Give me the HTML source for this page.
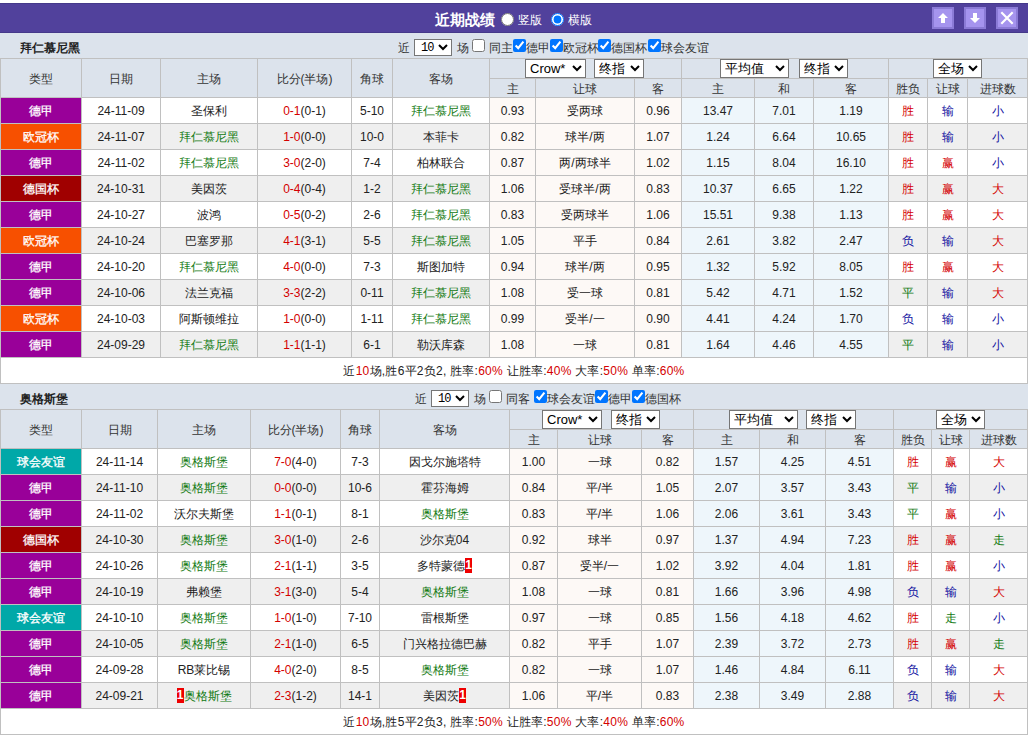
<!DOCTYPE html><html><head><meta charset="utf-8"><style>
*{margin:0;padding:0}
html,body{width:1029px;height:736px;overflow:hidden;background:#fff}
body{position:relative;font-family:"Liberation Sans",sans-serif;font-size:12px;color:#333}
.a{position:absolute;box-sizing:border-box;white-space:nowrap}
.s{position:absolute;height:19px;font-size:13px;font-family:"Liberation Sans",sans-serif;box-sizing:border-box;background:#fff;color:#000}
.s2{position:absolute;width:38px;height:17px;font-size:12px;padding-left:2px;letter-spacing:-1px;font-family:"Liberation Mono",monospace;box-sizing:border-box;background:#fff;color:#000}
.cb{position:absolute;width:13px;height:13px;margin:0}
.rd{position:absolute;width:13px;height:13px;margin:0}
.r1{display:inline-block;background:#e00;color:#fff;font-weight:bold;width:7px;text-align:center;line-height:15px;vertical-align:middle;overflow:hidden;position:relative;top:-1px}
</style></head><body><div class="a" style="left:0px;top:3px;width:1028px;height:30px;background:#51419c;border-top:1px solid #45398a;border-bottom:1px solid #45398a"></div>
<div class="a" style="left:0px;top:33px;width:1028px;height:1px;background:#e6e8f6"></div>
<div class="a" style="left:435px;top:3px;width:70px;height:30px;color:#fff;font-weight:bold;font-size:15px;display:flex;align-items:center;padding-top:4px">近期战绩</div>
<input type="radio" class="rd" style="left:501px;top:13px">
<div class="a" style="left:518px;top:3px;width:40px;height:30px;color:#fff;display:flex;align-items:center;padding-top:5px">竖版</div>
<input type="radio" class="rd" checked style="left:551px;top:13px">
<div class="a" style="left:568px;top:3px;width:40px;height:30px;color:#fff;display:flex;align-items:center;padding-top:5px">横版</div>
<div class="a" style="left:932px;top:7px;width:22px;height:22px;background:#a594ee;box-sizing:border-box;border:2px solid #8b7bd6;display:flex;align-items:center;justify-content:center"><svg width="12" height="12" viewBox="0 0 12 12"><path d="M6 1 L11 6 L8 6 L8 11 L4 11 L4 6 L1 6 Z" fill="#fff"/></svg></div>
<div class="a" style="left:964px;top:7px;width:22px;height:22px;background:#a594ee;box-sizing:border-box;border:2px solid #8b7bd6;display:flex;align-items:center;justify-content:center"><svg width="12" height="12" viewBox="0 0 12 12"><path d="M6 11 L11 6 L8 6 L8 1 L4 1 L4 6 L1 6 Z" fill="#fff"/></svg></div>
<div class="a" style="left:996px;top:7px;width:22px;height:22px;background:#a594ee;box-sizing:border-box;border:2px solid #8b7bd6;display:flex;align-items:center;justify-content:center"><svg width="14" height="14" viewBox="0 0 14 14"><path d="M1.3 1.3 L12.7 12.7 M12.7 1.3 L1.3 12.7" stroke="#fff" stroke-width="2.2"/></svg></div>
<div class="a" style="left:0px;top:33px;width:1028px;height:25px;background:#dce3ec"></div>
<div class="a" style="left:20px;top:33px;width:200px;height:25px;font-weight:bold;display:flex;align-items:center;padding-top:6px;color:#222">拜仁慕尼黑</div>
<div class="a" style="left:398px;top:33px;width:14px;height:25px;display:flex;align-items:center;color:#333;padding-top:5px">近</div>
<select class="s2" style="left:414px;top:39px"><option>10</option></select>
<div class="a" style="left:457px;top:33px;width:14px;height:25px;display:flex;align-items:center;color:#333;padding-top:5px">场</div>
<input type="checkbox" class="cb" style="left:472px;top:39px">
<div class="a" style="left:489px;top:33px;width:24px;height:25px;display:flex;align-items:center;color:#333;padding-top:5px">同主</div>
<input type="checkbox" class="cb" checked style="left:513px;top:39px">
<div class="a" style="left:526px;top:33px;width:60px;height:25px;display:flex;align-items:center;color:#333;padding-top:5px">德甲</div>
<input type="checkbox" class="cb" checked style="left:550px;top:39px">
<div class="a" style="left:563px;top:33px;width:60px;height:25px;display:flex;align-items:center;color:#333;padding-top:5px">欧冠杯</div>
<input type="checkbox" class="cb" checked style="left:598px;top:39px">
<div class="a" style="left:611px;top:33px;width:60px;height:25px;display:flex;align-items:center;color:#333;padding-top:5px">德国杯</div>
<input type="checkbox" class="cb" checked style="left:648px;top:39px">
<div class="a" style="left:661px;top:33px;width:60px;height:25px;display:flex;align-items:center;color:#333;padding-top:5px">球会友谊</div>
<div class="a" style="left:0px;top:58px;width:1028px;height:39px;background:#dce3ec"></div>
<div class="a" style="left:0px;top:97px;width:1028px;height:26px;background:#fff"></div>
<div class="a" style="left:489px;top:97px;width:192px;height:26px;background:#fdf9f6"></div>
<div class="a" style="left:681px;top:97px;width:207px;height:26px;background:#eef6fb"></div>
<div class="a" style="left:0px;top:123px;width:1028px;height:26px;background:#efefef"></div>
<div class="a" style="left:489px;top:123px;width:192px;height:26px;background:#fdf9f6"></div>
<div class="a" style="left:681px;top:123px;width:207px;height:26px;background:#eef6fb"></div>
<div class="a" style="left:0px;top:149px;width:1028px;height:26px;background:#fff"></div>
<div class="a" style="left:489px;top:149px;width:192px;height:26px;background:#fdf9f6"></div>
<div class="a" style="left:681px;top:149px;width:207px;height:26px;background:#eef6fb"></div>
<div class="a" style="left:0px;top:175px;width:1028px;height:26px;background:#efefef"></div>
<div class="a" style="left:489px;top:175px;width:192px;height:26px;background:#fdf9f6"></div>
<div class="a" style="left:681px;top:175px;width:207px;height:26px;background:#eef6fb"></div>
<div class="a" style="left:0px;top:201px;width:1028px;height:26px;background:#fff"></div>
<div class="a" style="left:489px;top:201px;width:192px;height:26px;background:#fdf9f6"></div>
<div class="a" style="left:681px;top:201px;width:207px;height:26px;background:#eef6fb"></div>
<div class="a" style="left:0px;top:227px;width:1028px;height:26px;background:#efefef"></div>
<div class="a" style="left:489px;top:227px;width:192px;height:26px;background:#fdf9f6"></div>
<div class="a" style="left:681px;top:227px;width:207px;height:26px;background:#eef6fb"></div>
<div class="a" style="left:0px;top:253px;width:1028px;height:26px;background:#fff"></div>
<div class="a" style="left:489px;top:253px;width:192px;height:26px;background:#fdf9f6"></div>
<div class="a" style="left:681px;top:253px;width:207px;height:26px;background:#eef6fb"></div>
<div class="a" style="left:0px;top:279px;width:1028px;height:26px;background:#efefef"></div>
<div class="a" style="left:489px;top:279px;width:192px;height:26px;background:#fdf9f6"></div>
<div class="a" style="left:681px;top:279px;width:207px;height:26px;background:#eef6fb"></div>
<div class="a" style="left:0px;top:305px;width:1028px;height:26px;background:#fff"></div>
<div class="a" style="left:489px;top:305px;width:192px;height:26px;background:#fdf9f6"></div>
<div class="a" style="left:681px;top:305px;width:207px;height:26px;background:#eef6fb"></div>
<div class="a" style="left:0px;top:331px;width:1028px;height:26px;background:#efefef"></div>
<div class="a" style="left:489px;top:331px;width:192px;height:26px;background:#fdf9f6"></div>
<div class="a" style="left:681px;top:331px;width:207px;height:26px;background:#eef6fb"></div>
<div class="a" style="left:0px;top:357px;width:1028px;height:26px;background:#fff"></div>
<div class="a" style="left:1px;top:59px;width:80px;height:38px;display:flex;align-items:center;justify-content:center;padding-top:1px;color:#333;padding-top:3px;"><span>类型</span></div>
<div class="a" style="left:82px;top:59px;width:78px;height:38px;display:flex;align-items:center;justify-content:center;padding-top:1px;color:#333;padding-top:3px;"><span>日期</span></div>
<div class="a" style="left:161px;top:59px;width:96px;height:38px;display:flex;align-items:center;justify-content:center;padding-top:1px;color:#333;padding-top:3px;"><span>主场</span></div>
<div class="a" style="left:258px;top:59px;width:93px;height:38px;display:flex;align-items:center;justify-content:center;padding-top:1px;color:#333;padding-top:3px;"><span>比分(半场)</span></div>
<div class="a" style="left:352px;top:59px;width:40px;height:38px;display:flex;align-items:center;justify-content:center;padding-top:1px;color:#333;padding-top:3px;"><span>角球</span></div>
<div class="a" style="left:393px;top:59px;width:96px;height:38px;display:flex;align-items:center;justify-content:center;padding-top:1px;color:#333;padding-top:3px;"><span>客场</span></div>
<div class="a" style="left:490px;top:79px;width:45px;height:18px;display:flex;align-items:center;justify-content:center;padding-top:1px;color:#333;padding-top:2px;"><span>主</span></div>
<div class="a" style="left:536px;top:79px;width:98px;height:18px;display:flex;align-items:center;justify-content:center;padding-top:1px;color:#333;padding-top:2px;"><span>让球</span></div>
<div class="a" style="left:635px;top:79px;width:46px;height:18px;display:flex;align-items:center;justify-content:center;padding-top:1px;color:#333;padding-top:2px;"><span>客</span></div>
<div class="a" style="left:682px;top:79px;width:72px;height:18px;display:flex;align-items:center;justify-content:center;padding-top:1px;color:#333;padding-top:2px;"><span>主</span></div>
<div class="a" style="left:755px;top:79px;width:58px;height:18px;display:flex;align-items:center;justify-content:center;padding-top:1px;color:#333;padding-top:2px;"><span>和</span></div>
<div class="a" style="left:814px;top:79px;width:74px;height:18px;display:flex;align-items:center;justify-content:center;padding-top:1px;color:#333;padding-top:2px;"><span>客</span></div>
<div class="a" style="left:889px;top:79px;width:38px;height:18px;display:flex;align-items:center;justify-content:center;padding-top:1px;color:#333;padding-top:2px;"><span>胜负</span></div>
<div class="a" style="left:928px;top:79px;width:39px;height:18px;display:flex;align-items:center;justify-content:center;padding-top:1px;color:#333;padding-top:2px;"><span>让球</span></div>
<div class="a" style="left:968px;top:79px;width:59px;height:18px;display:flex;align-items:center;justify-content:center;padding-top:1px;color:#333;padding-top:2px;"><span>进球数</span></div>
<select class="s" style="left:525px;top:59px;width:61px"><option>Crow*</option></select>
<select class="s" style="left:594px;top:59px;width:50px"><option>终指</option></select>
<select class="s" style="left:720px;top:59px;width:69px"><option>平均值</option></select>
<select class="s" style="left:799px;top:59px;width:49px"><option>终指</option></select>
<select class="s" style="left:933px;top:59px;width:49px"><option>全场</option></select>
<div class="a" style="left:1px;top:98px;width:80px;height:25px;display:flex;align-items:center;justify-content:center;padding-top:1px;background:#990099;color:#fff;-webkit-text-stroke:0.3px #fff;"><span>德甲</span></div>
<div class="a" style="left:82px;top:98px;width:78px;height:25px;display:flex;align-items:center;justify-content:center;padding-top:1px;color:#222;"><span>24-11-09</span></div>
<div class="a" style="left:161px;top:98px;width:96px;height:25px;display:flex;align-items:center;justify-content:center;padding-top:1px;color:#222;"><span>圣保利</span></div>
<div class="a" style="left:258px;top:98px;width:93px;height:25px;display:flex;align-items:center;justify-content:center;padding-top:1px;color:#222;"><span><span style="color:#d40000">0-1</span>(0-1)</span></div>
<div class="a" style="left:352px;top:98px;width:40px;height:25px;display:flex;align-items:center;justify-content:center;padding-top:1px;color:#222;"><span>5-10</span></div>
<div class="a" style="left:393px;top:98px;width:96px;height:25px;display:flex;align-items:center;justify-content:center;padding-top:1px;color:#222;"><span><span style="color:#127a12">拜仁慕尼黑</span></span></div>
<div class="a" style="left:490px;top:98px;width:45px;height:25px;display:flex;align-items:center;justify-content:center;padding-top:1px;color:#222;"><span>0.93</span></div>
<div class="a" style="left:536px;top:98px;width:98px;height:25px;display:flex;align-items:center;justify-content:center;padding-top:1px;color:#222;"><span>受两球</span></div>
<div class="a" style="left:635px;top:98px;width:46px;height:25px;display:flex;align-items:center;justify-content:center;padding-top:1px;color:#222;"><span>0.96</span></div>
<div class="a" style="left:682px;top:98px;width:72px;height:25px;display:flex;align-items:center;justify-content:center;padding-top:1px;color:#222;"><span>13.47</span></div>
<div class="a" style="left:755px;top:98px;width:58px;height:25px;display:flex;align-items:center;justify-content:center;padding-top:1px;color:#222;"><span>7.01</span></div>
<div class="a" style="left:814px;top:98px;width:74px;height:25px;display:flex;align-items:center;justify-content:center;padding-top:1px;color:#222;"><span>1.19</span></div>
<div class="a" style="left:889px;top:98px;width:38px;height:25px;display:flex;align-items:center;justify-content:center;padding-top:1px;color:#d40000;"><span>胜</span></div>
<div class="a" style="left:928px;top:98px;width:39px;height:25px;display:flex;align-items:center;justify-content:center;padding-top:1px;color:#1010a0;"><span>输</span></div>
<div class="a" style="left:968px;top:98px;width:59px;height:25px;display:flex;align-items:center;justify-content:center;padding-top:1px;color:#1010a0;"><span>小</span></div>
<div class="a" style="left:1px;top:124px;width:80px;height:25px;display:flex;align-items:center;justify-content:center;padding-top:1px;background:#f75000;color:#fff;-webkit-text-stroke:0.3px #fff;"><span>欧冠杯</span></div>
<div class="a" style="left:82px;top:124px;width:78px;height:25px;display:flex;align-items:center;justify-content:center;padding-top:1px;color:#222;"><span>24-11-07</span></div>
<div class="a" style="left:161px;top:124px;width:96px;height:25px;display:flex;align-items:center;justify-content:center;padding-top:1px;color:#222;"><span><span style="color:#127a12">拜仁慕尼黑</span></span></div>
<div class="a" style="left:258px;top:124px;width:93px;height:25px;display:flex;align-items:center;justify-content:center;padding-top:1px;color:#222;"><span><span style="color:#d40000">1-0</span>(0-0)</span></div>
<div class="a" style="left:352px;top:124px;width:40px;height:25px;display:flex;align-items:center;justify-content:center;padding-top:1px;color:#222;"><span>10-0</span></div>
<div class="a" style="left:393px;top:124px;width:96px;height:25px;display:flex;align-items:center;justify-content:center;padding-top:1px;color:#222;"><span>本菲卡</span></div>
<div class="a" style="left:490px;top:124px;width:45px;height:25px;display:flex;align-items:center;justify-content:center;padding-top:1px;color:#222;"><span>0.82</span></div>
<div class="a" style="left:536px;top:124px;width:98px;height:25px;display:flex;align-items:center;justify-content:center;padding-top:1px;color:#222;"><span>球半/两</span></div>
<div class="a" style="left:635px;top:124px;width:46px;height:25px;display:flex;align-items:center;justify-content:center;padding-top:1px;color:#222;"><span>1.07</span></div>
<div class="a" style="left:682px;top:124px;width:72px;height:25px;display:flex;align-items:center;justify-content:center;padding-top:1px;color:#222;"><span>1.24</span></div>
<div class="a" style="left:755px;top:124px;width:58px;height:25px;display:flex;align-items:center;justify-content:center;padding-top:1px;color:#222;"><span>6.64</span></div>
<div class="a" style="left:814px;top:124px;width:74px;height:25px;display:flex;align-items:center;justify-content:center;padding-top:1px;color:#222;"><span>10.65</span></div>
<div class="a" style="left:889px;top:124px;width:38px;height:25px;display:flex;align-items:center;justify-content:center;padding-top:1px;color:#d40000;"><span>胜</span></div>
<div class="a" style="left:928px;top:124px;width:39px;height:25px;display:flex;align-items:center;justify-content:center;padding-top:1px;color:#1010a0;"><span>输</span></div>
<div class="a" style="left:968px;top:124px;width:59px;height:25px;display:flex;align-items:center;justify-content:center;padding-top:1px;color:#1010a0;"><span>小</span></div>
<div class="a" style="left:1px;top:150px;width:80px;height:25px;display:flex;align-items:center;justify-content:center;padding-top:1px;background:#990099;color:#fff;-webkit-text-stroke:0.3px #fff;"><span>德甲</span></div>
<div class="a" style="left:82px;top:150px;width:78px;height:25px;display:flex;align-items:center;justify-content:center;padding-top:1px;color:#222;"><span>24-11-02</span></div>
<div class="a" style="left:161px;top:150px;width:96px;height:25px;display:flex;align-items:center;justify-content:center;padding-top:1px;color:#222;"><span><span style="color:#127a12">拜仁慕尼黑</span></span></div>
<div class="a" style="left:258px;top:150px;width:93px;height:25px;display:flex;align-items:center;justify-content:center;padding-top:1px;color:#222;"><span><span style="color:#d40000">3-0</span>(2-0)</span></div>
<div class="a" style="left:352px;top:150px;width:40px;height:25px;display:flex;align-items:center;justify-content:center;padding-top:1px;color:#222;"><span>7-4</span></div>
<div class="a" style="left:393px;top:150px;width:96px;height:25px;display:flex;align-items:center;justify-content:center;padding-top:1px;color:#222;"><span>柏林联合</span></div>
<div class="a" style="left:490px;top:150px;width:45px;height:25px;display:flex;align-items:center;justify-content:center;padding-top:1px;color:#222;"><span>0.87</span></div>
<div class="a" style="left:536px;top:150px;width:98px;height:25px;display:flex;align-items:center;justify-content:center;padding-top:1px;color:#222;"><span>两/两球半</span></div>
<div class="a" style="left:635px;top:150px;width:46px;height:25px;display:flex;align-items:center;justify-content:center;padding-top:1px;color:#222;"><span>1.02</span></div>
<div class="a" style="left:682px;top:150px;width:72px;height:25px;display:flex;align-items:center;justify-content:center;padding-top:1px;color:#222;"><span>1.15</span></div>
<div class="a" style="left:755px;top:150px;width:58px;height:25px;display:flex;align-items:center;justify-content:center;padding-top:1px;color:#222;"><span>8.04</span></div>
<div class="a" style="left:814px;top:150px;width:74px;height:25px;display:flex;align-items:center;justify-content:center;padding-top:1px;color:#222;"><span>16.10</span></div>
<div class="a" style="left:889px;top:150px;width:38px;height:25px;display:flex;align-items:center;justify-content:center;padding-top:1px;color:#d40000;"><span>胜</span></div>
<div class="a" style="left:928px;top:150px;width:39px;height:25px;display:flex;align-items:center;justify-content:center;padding-top:1px;color:#d40000;"><span>赢</span></div>
<div class="a" style="left:968px;top:150px;width:59px;height:25px;display:flex;align-items:center;justify-content:center;padding-top:1px;color:#1010a0;"><span>小</span></div>
<div class="a" style="left:1px;top:176px;width:80px;height:25px;display:flex;align-items:center;justify-content:center;padding-top:1px;background:#a00000;color:#fff;-webkit-text-stroke:0.3px #fff;"><span>德国杯</span></div>
<div class="a" style="left:82px;top:176px;width:78px;height:25px;display:flex;align-items:center;justify-content:center;padding-top:1px;color:#222;"><span>24-10-31</span></div>
<div class="a" style="left:161px;top:176px;width:96px;height:25px;display:flex;align-items:center;justify-content:center;padding-top:1px;color:#222;"><span>美因茨</span></div>
<div class="a" style="left:258px;top:176px;width:93px;height:25px;display:flex;align-items:center;justify-content:center;padding-top:1px;color:#222;"><span><span style="color:#d40000">0-4</span>(0-4)</span></div>
<div class="a" style="left:352px;top:176px;width:40px;height:25px;display:flex;align-items:center;justify-content:center;padding-top:1px;color:#222;"><span>1-2</span></div>
<div class="a" style="left:393px;top:176px;width:96px;height:25px;display:flex;align-items:center;justify-content:center;padding-top:1px;color:#222;"><span><span style="color:#127a12">拜仁慕尼黑</span></span></div>
<div class="a" style="left:490px;top:176px;width:45px;height:25px;display:flex;align-items:center;justify-content:center;padding-top:1px;color:#222;"><span>1.06</span></div>
<div class="a" style="left:536px;top:176px;width:98px;height:25px;display:flex;align-items:center;justify-content:center;padding-top:1px;color:#222;"><span>受球半/两</span></div>
<div class="a" style="left:635px;top:176px;width:46px;height:25px;display:flex;align-items:center;justify-content:center;padding-top:1px;color:#222;"><span>0.83</span></div>
<div class="a" style="left:682px;top:176px;width:72px;height:25px;display:flex;align-items:center;justify-content:center;padding-top:1px;color:#222;"><span>10.37</span></div>
<div class="a" style="left:755px;top:176px;width:58px;height:25px;display:flex;align-items:center;justify-content:center;padding-top:1px;color:#222;"><span>6.65</span></div>
<div class="a" style="left:814px;top:176px;width:74px;height:25px;display:flex;align-items:center;justify-content:center;padding-top:1px;color:#222;"><span>1.22</span></div>
<div class="a" style="left:889px;top:176px;width:38px;height:25px;display:flex;align-items:center;justify-content:center;padding-top:1px;color:#d40000;"><span>胜</span></div>
<div class="a" style="left:928px;top:176px;width:39px;height:25px;display:flex;align-items:center;justify-content:center;padding-top:1px;color:#d40000;"><span>赢</span></div>
<div class="a" style="left:968px;top:176px;width:59px;height:25px;display:flex;align-items:center;justify-content:center;padding-top:1px;color:#d40000;"><span>大</span></div>
<div class="a" style="left:1px;top:202px;width:80px;height:25px;display:flex;align-items:center;justify-content:center;padding-top:1px;background:#990099;color:#fff;-webkit-text-stroke:0.3px #fff;"><span>德甲</span></div>
<div class="a" style="left:82px;top:202px;width:78px;height:25px;display:flex;align-items:center;justify-content:center;padding-top:1px;color:#222;"><span>24-10-27</span></div>
<div class="a" style="left:161px;top:202px;width:96px;height:25px;display:flex;align-items:center;justify-content:center;padding-top:1px;color:#222;"><span>波鸿</span></div>
<div class="a" style="left:258px;top:202px;width:93px;height:25px;display:flex;align-items:center;justify-content:center;padding-top:1px;color:#222;"><span><span style="color:#d40000">0-5</span>(0-2)</span></div>
<div class="a" style="left:352px;top:202px;width:40px;height:25px;display:flex;align-items:center;justify-content:center;padding-top:1px;color:#222;"><span>2-6</span></div>
<div class="a" style="left:393px;top:202px;width:96px;height:25px;display:flex;align-items:center;justify-content:center;padding-top:1px;color:#222;"><span><span style="color:#127a12">拜仁慕尼黑</span></span></div>
<div class="a" style="left:490px;top:202px;width:45px;height:25px;display:flex;align-items:center;justify-content:center;padding-top:1px;color:#222;"><span>0.83</span></div>
<div class="a" style="left:536px;top:202px;width:98px;height:25px;display:flex;align-items:center;justify-content:center;padding-top:1px;color:#222;"><span>受两球半</span></div>
<div class="a" style="left:635px;top:202px;width:46px;height:25px;display:flex;align-items:center;justify-content:center;padding-top:1px;color:#222;"><span>1.06</span></div>
<div class="a" style="left:682px;top:202px;width:72px;height:25px;display:flex;align-items:center;justify-content:center;padding-top:1px;color:#222;"><span>15.51</span></div>
<div class="a" style="left:755px;top:202px;width:58px;height:25px;display:flex;align-items:center;justify-content:center;padding-top:1px;color:#222;"><span>9.38</span></div>
<div class="a" style="left:814px;top:202px;width:74px;height:25px;display:flex;align-items:center;justify-content:center;padding-top:1px;color:#222;"><span>1.13</span></div>
<div class="a" style="left:889px;top:202px;width:38px;height:25px;display:flex;align-items:center;justify-content:center;padding-top:1px;color:#d40000;"><span>胜</span></div>
<div class="a" style="left:928px;top:202px;width:39px;height:25px;display:flex;align-items:center;justify-content:center;padding-top:1px;color:#d40000;"><span>赢</span></div>
<div class="a" style="left:968px;top:202px;width:59px;height:25px;display:flex;align-items:center;justify-content:center;padding-top:1px;color:#d40000;"><span>大</span></div>
<div class="a" style="left:1px;top:228px;width:80px;height:25px;display:flex;align-items:center;justify-content:center;padding-top:1px;background:#f75000;color:#fff;-webkit-text-stroke:0.3px #fff;"><span>欧冠杯</span></div>
<div class="a" style="left:82px;top:228px;width:78px;height:25px;display:flex;align-items:center;justify-content:center;padding-top:1px;color:#222;"><span>24-10-24</span></div>
<div class="a" style="left:161px;top:228px;width:96px;height:25px;display:flex;align-items:center;justify-content:center;padding-top:1px;color:#222;"><span>巴塞罗那</span></div>
<div class="a" style="left:258px;top:228px;width:93px;height:25px;display:flex;align-items:center;justify-content:center;padding-top:1px;color:#222;"><span><span style="color:#d40000">4-1</span>(3-1)</span></div>
<div class="a" style="left:352px;top:228px;width:40px;height:25px;display:flex;align-items:center;justify-content:center;padding-top:1px;color:#222;"><span>5-5</span></div>
<div class="a" style="left:393px;top:228px;width:96px;height:25px;display:flex;align-items:center;justify-content:center;padding-top:1px;color:#222;"><span><span style="color:#127a12">拜仁慕尼黑</span></span></div>
<div class="a" style="left:490px;top:228px;width:45px;height:25px;display:flex;align-items:center;justify-content:center;padding-top:1px;color:#222;"><span>1.05</span></div>
<div class="a" style="left:536px;top:228px;width:98px;height:25px;display:flex;align-items:center;justify-content:center;padding-top:1px;color:#222;"><span>平手</span></div>
<div class="a" style="left:635px;top:228px;width:46px;height:25px;display:flex;align-items:center;justify-content:center;padding-top:1px;color:#222;"><span>0.84</span></div>
<div class="a" style="left:682px;top:228px;width:72px;height:25px;display:flex;align-items:center;justify-content:center;padding-top:1px;color:#222;"><span>2.61</span></div>
<div class="a" style="left:755px;top:228px;width:58px;height:25px;display:flex;align-items:center;justify-content:center;padding-top:1px;color:#222;"><span>3.82</span></div>
<div class="a" style="left:814px;top:228px;width:74px;height:25px;display:flex;align-items:center;justify-content:center;padding-top:1px;color:#222;"><span>2.47</span></div>
<div class="a" style="left:889px;top:228px;width:38px;height:25px;display:flex;align-items:center;justify-content:center;padding-top:1px;color:#1010a0;"><span>负</span></div>
<div class="a" style="left:928px;top:228px;width:39px;height:25px;display:flex;align-items:center;justify-content:center;padding-top:1px;color:#1010a0;"><span>输</span></div>
<div class="a" style="left:968px;top:228px;width:59px;height:25px;display:flex;align-items:center;justify-content:center;padding-top:1px;color:#d40000;"><span>大</span></div>
<div class="a" style="left:1px;top:254px;width:80px;height:25px;display:flex;align-items:center;justify-content:center;padding-top:1px;background:#990099;color:#fff;-webkit-text-stroke:0.3px #fff;"><span>德甲</span></div>
<div class="a" style="left:82px;top:254px;width:78px;height:25px;display:flex;align-items:center;justify-content:center;padding-top:1px;color:#222;"><span>24-10-20</span></div>
<div class="a" style="left:161px;top:254px;width:96px;height:25px;display:flex;align-items:center;justify-content:center;padding-top:1px;color:#222;"><span><span style="color:#127a12">拜仁慕尼黑</span></span></div>
<div class="a" style="left:258px;top:254px;width:93px;height:25px;display:flex;align-items:center;justify-content:center;padding-top:1px;color:#222;"><span><span style="color:#d40000">4-0</span>(0-0)</span></div>
<div class="a" style="left:352px;top:254px;width:40px;height:25px;display:flex;align-items:center;justify-content:center;padding-top:1px;color:#222;"><span>7-3</span></div>
<div class="a" style="left:393px;top:254px;width:96px;height:25px;display:flex;align-items:center;justify-content:center;padding-top:1px;color:#222;"><span>斯图加特</span></div>
<div class="a" style="left:490px;top:254px;width:45px;height:25px;display:flex;align-items:center;justify-content:center;padding-top:1px;color:#222;"><span>0.94</span></div>
<div class="a" style="left:536px;top:254px;width:98px;height:25px;display:flex;align-items:center;justify-content:center;padding-top:1px;color:#222;"><span>球半/两</span></div>
<div class="a" style="left:635px;top:254px;width:46px;height:25px;display:flex;align-items:center;justify-content:center;padding-top:1px;color:#222;"><span>0.95</span></div>
<div class="a" style="left:682px;top:254px;width:72px;height:25px;display:flex;align-items:center;justify-content:center;padding-top:1px;color:#222;"><span>1.32</span></div>
<div class="a" style="left:755px;top:254px;width:58px;height:25px;display:flex;align-items:center;justify-content:center;padding-top:1px;color:#222;"><span>5.92</span></div>
<div class="a" style="left:814px;top:254px;width:74px;height:25px;display:flex;align-items:center;justify-content:center;padding-top:1px;color:#222;"><span>8.05</span></div>
<div class="a" style="left:889px;top:254px;width:38px;height:25px;display:flex;align-items:center;justify-content:center;padding-top:1px;color:#d40000;"><span>胜</span></div>
<div class="a" style="left:928px;top:254px;width:39px;height:25px;display:flex;align-items:center;justify-content:center;padding-top:1px;color:#d40000;"><span>赢</span></div>
<div class="a" style="left:968px;top:254px;width:59px;height:25px;display:flex;align-items:center;justify-content:center;padding-top:1px;color:#d40000;"><span>大</span></div>
<div class="a" style="left:1px;top:280px;width:80px;height:25px;display:flex;align-items:center;justify-content:center;padding-top:1px;background:#990099;color:#fff;-webkit-text-stroke:0.3px #fff;"><span>德甲</span></div>
<div class="a" style="left:82px;top:280px;width:78px;height:25px;display:flex;align-items:center;justify-content:center;padding-top:1px;color:#222;"><span>24-10-06</span></div>
<div class="a" style="left:161px;top:280px;width:96px;height:25px;display:flex;align-items:center;justify-content:center;padding-top:1px;color:#222;"><span>法兰克福</span></div>
<div class="a" style="left:258px;top:280px;width:93px;height:25px;display:flex;align-items:center;justify-content:center;padding-top:1px;color:#222;"><span><span style="color:#d40000">3-3</span>(2-2)</span></div>
<div class="a" style="left:352px;top:280px;width:40px;height:25px;display:flex;align-items:center;justify-content:center;padding-top:1px;color:#222;"><span>0-11</span></div>
<div class="a" style="left:393px;top:280px;width:96px;height:25px;display:flex;align-items:center;justify-content:center;padding-top:1px;color:#222;"><span><span style="color:#127a12">拜仁慕尼黑</span></span></div>
<div class="a" style="left:490px;top:280px;width:45px;height:25px;display:flex;align-items:center;justify-content:center;padding-top:1px;color:#222;"><span>1.08</span></div>
<div class="a" style="left:536px;top:280px;width:98px;height:25px;display:flex;align-items:center;justify-content:center;padding-top:1px;color:#222;"><span>受一球</span></div>
<div class="a" style="left:635px;top:280px;width:46px;height:25px;display:flex;align-items:center;justify-content:center;padding-top:1px;color:#222;"><span>0.81</span></div>
<div class="a" style="left:682px;top:280px;width:72px;height:25px;display:flex;align-items:center;justify-content:center;padding-top:1px;color:#222;"><span>5.42</span></div>
<div class="a" style="left:755px;top:280px;width:58px;height:25px;display:flex;align-items:center;justify-content:center;padding-top:1px;color:#222;"><span>4.71</span></div>
<div class="a" style="left:814px;top:280px;width:74px;height:25px;display:flex;align-items:center;justify-content:center;padding-top:1px;color:#222;"><span>1.52</span></div>
<div class="a" style="left:889px;top:280px;width:38px;height:25px;display:flex;align-items:center;justify-content:center;padding-top:1px;color:#127a12;"><span>平</span></div>
<div class="a" style="left:928px;top:280px;width:39px;height:25px;display:flex;align-items:center;justify-content:center;padding-top:1px;color:#1010a0;"><span>输</span></div>
<div class="a" style="left:968px;top:280px;width:59px;height:25px;display:flex;align-items:center;justify-content:center;padding-top:1px;color:#d40000;"><span>大</span></div>
<div class="a" style="left:1px;top:306px;width:80px;height:25px;display:flex;align-items:center;justify-content:center;padding-top:1px;background:#f75000;color:#fff;-webkit-text-stroke:0.3px #fff;"><span>欧冠杯</span></div>
<div class="a" style="left:82px;top:306px;width:78px;height:25px;display:flex;align-items:center;justify-content:center;padding-top:1px;color:#222;"><span>24-10-03</span></div>
<div class="a" style="left:161px;top:306px;width:96px;height:25px;display:flex;align-items:center;justify-content:center;padding-top:1px;color:#222;"><span>阿斯顿维拉</span></div>
<div class="a" style="left:258px;top:306px;width:93px;height:25px;display:flex;align-items:center;justify-content:center;padding-top:1px;color:#222;"><span><span style="color:#d40000">1-0</span>(0-0)</span></div>
<div class="a" style="left:352px;top:306px;width:40px;height:25px;display:flex;align-items:center;justify-content:center;padding-top:1px;color:#222;"><span>1-11</span></div>
<div class="a" style="left:393px;top:306px;width:96px;height:25px;display:flex;align-items:center;justify-content:center;padding-top:1px;color:#222;"><span><span style="color:#127a12">拜仁慕尼黑</span></span></div>
<div class="a" style="left:490px;top:306px;width:45px;height:25px;display:flex;align-items:center;justify-content:center;padding-top:1px;color:#222;"><span>0.99</span></div>
<div class="a" style="left:536px;top:306px;width:98px;height:25px;display:flex;align-items:center;justify-content:center;padding-top:1px;color:#222;"><span>受半/一</span></div>
<div class="a" style="left:635px;top:306px;width:46px;height:25px;display:flex;align-items:center;justify-content:center;padding-top:1px;color:#222;"><span>0.90</span></div>
<div class="a" style="left:682px;top:306px;width:72px;height:25px;display:flex;align-items:center;justify-content:center;padding-top:1px;color:#222;"><span>4.41</span></div>
<div class="a" style="left:755px;top:306px;width:58px;height:25px;display:flex;align-items:center;justify-content:center;padding-top:1px;color:#222;"><span>4.24</span></div>
<div class="a" style="left:814px;top:306px;width:74px;height:25px;display:flex;align-items:center;justify-content:center;padding-top:1px;color:#222;"><span>1.70</span></div>
<div class="a" style="left:889px;top:306px;width:38px;height:25px;display:flex;align-items:center;justify-content:center;padding-top:1px;color:#1010a0;"><span>负</span></div>
<div class="a" style="left:928px;top:306px;width:39px;height:25px;display:flex;align-items:center;justify-content:center;padding-top:1px;color:#1010a0;"><span>输</span></div>
<div class="a" style="left:968px;top:306px;width:59px;height:25px;display:flex;align-items:center;justify-content:center;padding-top:1px;color:#1010a0;"><span>小</span></div>
<div class="a" style="left:1px;top:332px;width:80px;height:25px;display:flex;align-items:center;justify-content:center;padding-top:1px;background:#990099;color:#fff;-webkit-text-stroke:0.3px #fff;"><span>德甲</span></div>
<div class="a" style="left:82px;top:332px;width:78px;height:25px;display:flex;align-items:center;justify-content:center;padding-top:1px;color:#222;"><span>24-09-29</span></div>
<div class="a" style="left:161px;top:332px;width:96px;height:25px;display:flex;align-items:center;justify-content:center;padding-top:1px;color:#222;"><span><span style="color:#127a12">拜仁慕尼黑</span></span></div>
<div class="a" style="left:258px;top:332px;width:93px;height:25px;display:flex;align-items:center;justify-content:center;padding-top:1px;color:#222;"><span><span style="color:#d40000">1-1</span>(1-1)</span></div>
<div class="a" style="left:352px;top:332px;width:40px;height:25px;display:flex;align-items:center;justify-content:center;padding-top:1px;color:#222;"><span>6-1</span></div>
<div class="a" style="left:393px;top:332px;width:96px;height:25px;display:flex;align-items:center;justify-content:center;padding-top:1px;color:#222;"><span>勒沃库森</span></div>
<div class="a" style="left:490px;top:332px;width:45px;height:25px;display:flex;align-items:center;justify-content:center;padding-top:1px;color:#222;"><span>1.08</span></div>
<div class="a" style="left:536px;top:332px;width:98px;height:25px;display:flex;align-items:center;justify-content:center;padding-top:1px;color:#222;"><span>一球</span></div>
<div class="a" style="left:635px;top:332px;width:46px;height:25px;display:flex;align-items:center;justify-content:center;padding-top:1px;color:#222;"><span>0.81</span></div>
<div class="a" style="left:682px;top:332px;width:72px;height:25px;display:flex;align-items:center;justify-content:center;padding-top:1px;color:#222;"><span>1.64</span></div>
<div class="a" style="left:755px;top:332px;width:58px;height:25px;display:flex;align-items:center;justify-content:center;padding-top:1px;color:#222;"><span>4.46</span></div>
<div class="a" style="left:814px;top:332px;width:74px;height:25px;display:flex;align-items:center;justify-content:center;padding-top:1px;color:#222;"><span>4.55</span></div>
<div class="a" style="left:889px;top:332px;width:38px;height:25px;display:flex;align-items:center;justify-content:center;padding-top:1px;color:#127a12;"><span>平</span></div>
<div class="a" style="left:928px;top:332px;width:39px;height:25px;display:flex;align-items:center;justify-content:center;padding-top:1px;color:#1010a0;"><span>输</span></div>
<div class="a" style="left:968px;top:332px;width:59px;height:25px;display:flex;align-items:center;justify-content:center;padding-top:1px;color:#1010a0;"><span>小</span></div>
<div class="a" style="left:1px;top:358px;width:1026px;height:25px;display:flex;align-items:center;justify-content:center;padding-top:1px;color:#222;letter-spacing:0.25px;"><span>近<span style="color:#d40000">10</span>场,胜6平2负2, 胜率:<span style="color:#d40000">60%</span> 让胜率:<span style="color:#d40000">40%</span> 大率:<span style="color:#d40000">50%</span> 单率:<span style="color:#d40000">60%</span></span></div>
<div class="a" style="left:0px;top:58px;width:1028px;height:1px;background:#c0c0c0"></div>
<div class="a" style="left:489px;top:78px;width:539px;height:1px;background:#c0c0c0"></div>
<div class="a" style="left:0px;top:97px;width:1028px;height:1px;background:#c0c0c0"></div>
<div class="a" style="left:0px;top:123px;width:1028px;height:1px;background:#c0c0c0"></div>
<div class="a" style="left:0px;top:149px;width:1028px;height:1px;background:#c0c0c0"></div>
<div class="a" style="left:0px;top:175px;width:1028px;height:1px;background:#c0c0c0"></div>
<div class="a" style="left:0px;top:201px;width:1028px;height:1px;background:#c0c0c0"></div>
<div class="a" style="left:0px;top:227px;width:1028px;height:1px;background:#c0c0c0"></div>
<div class="a" style="left:0px;top:253px;width:1028px;height:1px;background:#c0c0c0"></div>
<div class="a" style="left:0px;top:279px;width:1028px;height:1px;background:#c0c0c0"></div>
<div class="a" style="left:0px;top:305px;width:1028px;height:1px;background:#c0c0c0"></div>
<div class="a" style="left:0px;top:331px;width:1028px;height:1px;background:#c0c0c0"></div>
<div class="a" style="left:0px;top:357px;width:1028px;height:1px;background:#c0c0c0"></div>
<div class="a" style="left:0px;top:383px;width:1028px;height:1px;background:#c0c0c0"></div>
<div class="a" style="left:0px;top:58px;width:1px;height:326px;background:#c0c0c0"></div>
<div class="a" style="left:1027px;top:58px;width:1px;height:326px;background:#c0c0c0"></div>
<div class="a" style="left:81px;top:58px;width:1px;height:300px;background:#c0c0c0"></div>
<div class="a" style="left:160px;top:58px;width:1px;height:300px;background:#c0c0c0"></div>
<div class="a" style="left:257px;top:58px;width:1px;height:300px;background:#c0c0c0"></div>
<div class="a" style="left:351px;top:58px;width:1px;height:300px;background:#c0c0c0"></div>
<div class="a" style="left:392px;top:58px;width:1px;height:300px;background:#c0c0c0"></div>
<div class="a" style="left:489px;top:58px;width:1px;height:300px;background:#c0c0c0"></div>
<div class="a" style="left:535px;top:78px;width:1px;height:280px;background:#c0c0c0"></div>
<div class="a" style="left:634px;top:78px;width:1px;height:280px;background:#c0c0c0"></div>
<div class="a" style="left:681px;top:58px;width:1px;height:300px;background:#c0c0c0"></div>
<div class="a" style="left:754px;top:78px;width:1px;height:280px;background:#c0c0c0"></div>
<div class="a" style="left:813px;top:78px;width:1px;height:280px;background:#c0c0c0"></div>
<div class="a" style="left:888px;top:58px;width:1px;height:300px;background:#c0c0c0"></div>
<div class="a" style="left:927px;top:78px;width:1px;height:280px;background:#c0c0c0"></div>
<div class="a" style="left:967px;top:78px;width:1px;height:280px;background:#c0c0c0"></div>
<div class="a" style="left:0px;top:384px;width:1028px;height:25px;background:#dce3ec"></div>
<div class="a" style="left:20px;top:384px;width:200px;height:25px;font-weight:bold;display:flex;align-items:center;padding-top:6px;color:#222">奥格斯堡</div>
<div class="a" style="left:415px;top:384px;width:14px;height:25px;display:flex;align-items:center;color:#333;padding-top:5px">近</div>
<select class="s2" style="left:431px;top:390px"><option>10</option></select>
<div class="a" style="left:474px;top:384px;width:14px;height:25px;display:flex;align-items:center;color:#333;padding-top:5px">场</div>
<input type="checkbox" class="cb" style="left:489px;top:390px">
<div class="a" style="left:506px;top:384px;width:24px;height:25px;display:flex;align-items:center;color:#333;padding-top:5px">同客</div>
<input type="checkbox" class="cb" checked style="left:534px;top:390px">
<div class="a" style="left:547px;top:384px;width:60px;height:25px;display:flex;align-items:center;color:#333;padding-top:5px">球会友谊</div>
<input type="checkbox" class="cb" checked style="left:595px;top:390px">
<div class="a" style="left:608px;top:384px;width:60px;height:25px;display:flex;align-items:center;color:#333;padding-top:5px">德甲</div>
<input type="checkbox" class="cb" checked style="left:632px;top:390px">
<div class="a" style="left:645px;top:384px;width:60px;height:25px;display:flex;align-items:center;color:#333;padding-top:5px">德国杯</div>
<div class="a" style="left:0px;top:409px;width:1028px;height:39px;background:#dce3ec"></div>
<div class="a" style="left:0px;top:448px;width:1028px;height:26px;background:#fff"></div>
<div class="a" style="left:509px;top:448px;width:184px;height:26px;background:#fdf9f6"></div>
<div class="a" style="left:693px;top:448px;width:200px;height:26px;background:#eef6fb"></div>
<div class="a" style="left:0px;top:474px;width:1028px;height:26px;background:#efefef"></div>
<div class="a" style="left:509px;top:474px;width:184px;height:26px;background:#fdf9f6"></div>
<div class="a" style="left:693px;top:474px;width:200px;height:26px;background:#eef6fb"></div>
<div class="a" style="left:0px;top:500px;width:1028px;height:26px;background:#fff"></div>
<div class="a" style="left:509px;top:500px;width:184px;height:26px;background:#fdf9f6"></div>
<div class="a" style="left:693px;top:500px;width:200px;height:26px;background:#eef6fb"></div>
<div class="a" style="left:0px;top:526px;width:1028px;height:26px;background:#efefef"></div>
<div class="a" style="left:509px;top:526px;width:184px;height:26px;background:#fdf9f6"></div>
<div class="a" style="left:693px;top:526px;width:200px;height:26px;background:#eef6fb"></div>
<div class="a" style="left:0px;top:552px;width:1028px;height:26px;background:#fff"></div>
<div class="a" style="left:509px;top:552px;width:184px;height:26px;background:#fdf9f6"></div>
<div class="a" style="left:693px;top:552px;width:200px;height:26px;background:#eef6fb"></div>
<div class="a" style="left:0px;top:578px;width:1028px;height:26px;background:#efefef"></div>
<div class="a" style="left:509px;top:578px;width:184px;height:26px;background:#fdf9f6"></div>
<div class="a" style="left:693px;top:578px;width:200px;height:26px;background:#eef6fb"></div>
<div class="a" style="left:0px;top:604px;width:1028px;height:26px;background:#fff"></div>
<div class="a" style="left:509px;top:604px;width:184px;height:26px;background:#fdf9f6"></div>
<div class="a" style="left:693px;top:604px;width:200px;height:26px;background:#eef6fb"></div>
<div class="a" style="left:0px;top:630px;width:1028px;height:26px;background:#efefef"></div>
<div class="a" style="left:509px;top:630px;width:184px;height:26px;background:#fdf9f6"></div>
<div class="a" style="left:693px;top:630px;width:200px;height:26px;background:#eef6fb"></div>
<div class="a" style="left:0px;top:656px;width:1028px;height:26px;background:#fff"></div>
<div class="a" style="left:509px;top:656px;width:184px;height:26px;background:#fdf9f6"></div>
<div class="a" style="left:693px;top:656px;width:200px;height:26px;background:#eef6fb"></div>
<div class="a" style="left:0px;top:682px;width:1028px;height:26px;background:#efefef"></div>
<div class="a" style="left:509px;top:682px;width:184px;height:26px;background:#fdf9f6"></div>
<div class="a" style="left:693px;top:682px;width:200px;height:26px;background:#eef6fb"></div>
<div class="a" style="left:0px;top:708px;width:1028px;height:26px;background:#fff"></div>
<div class="a" style="left:1px;top:410px;width:80px;height:38px;display:flex;align-items:center;justify-content:center;padding-top:1px;color:#333;padding-top:3px;"><span>类型</span></div>
<div class="a" style="left:82px;top:410px;width:75px;height:38px;display:flex;align-items:center;justify-content:center;padding-top:1px;color:#333;padding-top:3px;"><span>日期</span></div>
<div class="a" style="left:158px;top:410px;width:92px;height:38px;display:flex;align-items:center;justify-content:center;padding-top:1px;color:#333;padding-top:3px;"><span>主场</span></div>
<div class="a" style="left:251px;top:410px;width:89px;height:38px;display:flex;align-items:center;justify-content:center;padding-top:1px;color:#333;padding-top:3px;"><span>比分(半场)</span></div>
<div class="a" style="left:341px;top:410px;width:38px;height:38px;display:flex;align-items:center;justify-content:center;padding-top:1px;color:#333;padding-top:3px;"><span>角球</span></div>
<div class="a" style="left:380px;top:410px;width:129px;height:38px;display:flex;align-items:center;justify-content:center;padding-top:1px;color:#333;padding-top:3px;"><span>客场</span></div>
<div class="a" style="left:510px;top:430px;width:47px;height:18px;display:flex;align-items:center;justify-content:center;padding-top:1px;color:#333;padding-top:2px;"><span>主</span></div>
<div class="a" style="left:558px;top:430px;width:83px;height:18px;display:flex;align-items:center;justify-content:center;padding-top:1px;color:#333;padding-top:2px;"><span>让球</span></div>
<div class="a" style="left:642px;top:430px;width:51px;height:18px;display:flex;align-items:center;justify-content:center;padding-top:1px;color:#333;padding-top:2px;"><span>客</span></div>
<div class="a" style="left:694px;top:430px;width:65px;height:18px;display:flex;align-items:center;justify-content:center;padding-top:1px;color:#333;padding-top:2px;"><span>主</span></div>
<div class="a" style="left:760px;top:430px;width:65px;height:18px;display:flex;align-items:center;justify-content:center;padding-top:1px;color:#333;padding-top:2px;"><span>和</span></div>
<div class="a" style="left:826px;top:430px;width:67px;height:18px;display:flex;align-items:center;justify-content:center;padding-top:1px;color:#333;padding-top:2px;"><span>客</span></div>
<div class="a" style="left:894px;top:430px;width:37px;height:18px;display:flex;align-items:center;justify-content:center;padding-top:1px;color:#333;padding-top:2px;"><span>胜负</span></div>
<div class="a" style="left:932px;top:430px;width:37px;height:18px;display:flex;align-items:center;justify-content:center;padding-top:1px;color:#333;padding-top:2px;"><span>让球</span></div>
<div class="a" style="left:970px;top:430px;width:57px;height:18px;display:flex;align-items:center;justify-content:center;padding-top:1px;color:#333;padding-top:2px;"><span>进球数</span></div>
<select class="s" style="left:542px;top:410px;width:60px"><option>Crow*</option></select>
<select class="s" style="left:611px;top:410px;width:49px"><option>终指</option></select>
<select class="s" style="left:729px;top:410px;width:69px"><option>平均值</option></select>
<select class="s" style="left:806px;top:410px;width:50px"><option>终指</option></select>
<select class="s" style="left:936px;top:410px;width:49px"><option>全场</option></select>
<div class="a" style="left:1px;top:449px;width:80px;height:25px;display:flex;align-items:center;justify-content:center;padding-top:1px;background:#00a8a8;color:#fff;-webkit-text-stroke:0.3px #fff;"><span>球会友谊</span></div>
<div class="a" style="left:82px;top:449px;width:75px;height:25px;display:flex;align-items:center;justify-content:center;padding-top:1px;color:#222;"><span>24-11-14</span></div>
<div class="a" style="left:158px;top:449px;width:92px;height:25px;display:flex;align-items:center;justify-content:center;padding-top:1px;color:#222;"><span><span style="color:#127a12">奥格斯堡</span></span></div>
<div class="a" style="left:251px;top:449px;width:89px;height:25px;display:flex;align-items:center;justify-content:center;padding-top:1px;color:#222;"><span><span style="color:#d40000">7-0</span>(4-0)</span></div>
<div class="a" style="left:341px;top:449px;width:38px;height:25px;display:flex;align-items:center;justify-content:center;padding-top:1px;color:#222;"><span>7-3</span></div>
<div class="a" style="left:380px;top:449px;width:129px;height:25px;display:flex;align-items:center;justify-content:center;padding-top:1px;color:#222;"><span>因戈尔施塔特</span></div>
<div class="a" style="left:510px;top:449px;width:47px;height:25px;display:flex;align-items:center;justify-content:center;padding-top:1px;color:#222;"><span>1.00</span></div>
<div class="a" style="left:558px;top:449px;width:83px;height:25px;display:flex;align-items:center;justify-content:center;padding-top:1px;color:#222;"><span>一球</span></div>
<div class="a" style="left:642px;top:449px;width:51px;height:25px;display:flex;align-items:center;justify-content:center;padding-top:1px;color:#222;"><span>0.82</span></div>
<div class="a" style="left:694px;top:449px;width:65px;height:25px;display:flex;align-items:center;justify-content:center;padding-top:1px;color:#222;"><span>1.57</span></div>
<div class="a" style="left:760px;top:449px;width:65px;height:25px;display:flex;align-items:center;justify-content:center;padding-top:1px;color:#222;"><span>4.25</span></div>
<div class="a" style="left:826px;top:449px;width:67px;height:25px;display:flex;align-items:center;justify-content:center;padding-top:1px;color:#222;"><span>4.51</span></div>
<div class="a" style="left:894px;top:449px;width:37px;height:25px;display:flex;align-items:center;justify-content:center;padding-top:1px;color:#d40000;"><span>胜</span></div>
<div class="a" style="left:932px;top:449px;width:37px;height:25px;display:flex;align-items:center;justify-content:center;padding-top:1px;color:#d40000;"><span>赢</span></div>
<div class="a" style="left:970px;top:449px;width:57px;height:25px;display:flex;align-items:center;justify-content:center;padding-top:1px;color:#d40000;"><span>大</span></div>
<div class="a" style="left:1px;top:475px;width:80px;height:25px;display:flex;align-items:center;justify-content:center;padding-top:1px;background:#990099;color:#fff;-webkit-text-stroke:0.3px #fff;"><span>德甲</span></div>
<div class="a" style="left:82px;top:475px;width:75px;height:25px;display:flex;align-items:center;justify-content:center;padding-top:1px;color:#222;"><span>24-11-10</span></div>
<div class="a" style="left:158px;top:475px;width:92px;height:25px;display:flex;align-items:center;justify-content:center;padding-top:1px;color:#222;"><span><span style="color:#127a12">奥格斯堡</span></span></div>
<div class="a" style="left:251px;top:475px;width:89px;height:25px;display:flex;align-items:center;justify-content:center;padding-top:1px;color:#222;"><span><span style="color:#d40000">0-0</span>(0-0)</span></div>
<div class="a" style="left:341px;top:475px;width:38px;height:25px;display:flex;align-items:center;justify-content:center;padding-top:1px;color:#222;"><span>10-6</span></div>
<div class="a" style="left:380px;top:475px;width:129px;height:25px;display:flex;align-items:center;justify-content:center;padding-top:1px;color:#222;"><span>霍芬海姆</span></div>
<div class="a" style="left:510px;top:475px;width:47px;height:25px;display:flex;align-items:center;justify-content:center;padding-top:1px;color:#222;"><span>0.84</span></div>
<div class="a" style="left:558px;top:475px;width:83px;height:25px;display:flex;align-items:center;justify-content:center;padding-top:1px;color:#222;"><span>平/半</span></div>
<div class="a" style="left:642px;top:475px;width:51px;height:25px;display:flex;align-items:center;justify-content:center;padding-top:1px;color:#222;"><span>1.05</span></div>
<div class="a" style="left:694px;top:475px;width:65px;height:25px;display:flex;align-items:center;justify-content:center;padding-top:1px;color:#222;"><span>2.07</span></div>
<div class="a" style="left:760px;top:475px;width:65px;height:25px;display:flex;align-items:center;justify-content:center;padding-top:1px;color:#222;"><span>3.57</span></div>
<div class="a" style="left:826px;top:475px;width:67px;height:25px;display:flex;align-items:center;justify-content:center;padding-top:1px;color:#222;"><span>3.43</span></div>
<div class="a" style="left:894px;top:475px;width:37px;height:25px;display:flex;align-items:center;justify-content:center;padding-top:1px;color:#127a12;"><span>平</span></div>
<div class="a" style="left:932px;top:475px;width:37px;height:25px;display:flex;align-items:center;justify-content:center;padding-top:1px;color:#1010a0;"><span>输</span></div>
<div class="a" style="left:970px;top:475px;width:57px;height:25px;display:flex;align-items:center;justify-content:center;padding-top:1px;color:#1010a0;"><span>小</span></div>
<div class="a" style="left:1px;top:501px;width:80px;height:25px;display:flex;align-items:center;justify-content:center;padding-top:1px;background:#990099;color:#fff;-webkit-text-stroke:0.3px #fff;"><span>德甲</span></div>
<div class="a" style="left:82px;top:501px;width:75px;height:25px;display:flex;align-items:center;justify-content:center;padding-top:1px;color:#222;"><span>24-11-02</span></div>
<div class="a" style="left:158px;top:501px;width:92px;height:25px;display:flex;align-items:center;justify-content:center;padding-top:1px;color:#222;"><span>沃尔夫斯堡</span></div>
<div class="a" style="left:251px;top:501px;width:89px;height:25px;display:flex;align-items:center;justify-content:center;padding-top:1px;color:#222;"><span><span style="color:#d40000">1-1</span>(0-1)</span></div>
<div class="a" style="left:341px;top:501px;width:38px;height:25px;display:flex;align-items:center;justify-content:center;padding-top:1px;color:#222;"><span>8-1</span></div>
<div class="a" style="left:380px;top:501px;width:129px;height:25px;display:flex;align-items:center;justify-content:center;padding-top:1px;color:#222;"><span><span style="color:#127a12">奥格斯堡</span></span></div>
<div class="a" style="left:510px;top:501px;width:47px;height:25px;display:flex;align-items:center;justify-content:center;padding-top:1px;color:#222;"><span>0.83</span></div>
<div class="a" style="left:558px;top:501px;width:83px;height:25px;display:flex;align-items:center;justify-content:center;padding-top:1px;color:#222;"><span>平/半</span></div>
<div class="a" style="left:642px;top:501px;width:51px;height:25px;display:flex;align-items:center;justify-content:center;padding-top:1px;color:#222;"><span>1.06</span></div>
<div class="a" style="left:694px;top:501px;width:65px;height:25px;display:flex;align-items:center;justify-content:center;padding-top:1px;color:#222;"><span>2.06</span></div>
<div class="a" style="left:760px;top:501px;width:65px;height:25px;display:flex;align-items:center;justify-content:center;padding-top:1px;color:#222;"><span>3.61</span></div>
<div class="a" style="left:826px;top:501px;width:67px;height:25px;display:flex;align-items:center;justify-content:center;padding-top:1px;color:#222;"><span>3.43</span></div>
<div class="a" style="left:894px;top:501px;width:37px;height:25px;display:flex;align-items:center;justify-content:center;padding-top:1px;color:#127a12;"><span>平</span></div>
<div class="a" style="left:932px;top:501px;width:37px;height:25px;display:flex;align-items:center;justify-content:center;padding-top:1px;color:#d40000;"><span>赢</span></div>
<div class="a" style="left:970px;top:501px;width:57px;height:25px;display:flex;align-items:center;justify-content:center;padding-top:1px;color:#1010a0;"><span>小</span></div>
<div class="a" style="left:1px;top:527px;width:80px;height:25px;display:flex;align-items:center;justify-content:center;padding-top:1px;background:#a00000;color:#fff;-webkit-text-stroke:0.3px #fff;"><span>德国杯</span></div>
<div class="a" style="left:82px;top:527px;width:75px;height:25px;display:flex;align-items:center;justify-content:center;padding-top:1px;color:#222;"><span>24-10-30</span></div>
<div class="a" style="left:158px;top:527px;width:92px;height:25px;display:flex;align-items:center;justify-content:center;padding-top:1px;color:#222;"><span><span style="color:#127a12">奥格斯堡</span></span></div>
<div class="a" style="left:251px;top:527px;width:89px;height:25px;display:flex;align-items:center;justify-content:center;padding-top:1px;color:#222;"><span><span style="color:#d40000">3-0</span>(1-0)</span></div>
<div class="a" style="left:341px;top:527px;width:38px;height:25px;display:flex;align-items:center;justify-content:center;padding-top:1px;color:#222;"><span>2-6</span></div>
<div class="a" style="left:380px;top:527px;width:129px;height:25px;display:flex;align-items:center;justify-content:center;padding-top:1px;color:#222;"><span>沙尔克04</span></div>
<div class="a" style="left:510px;top:527px;width:47px;height:25px;display:flex;align-items:center;justify-content:center;padding-top:1px;color:#222;"><span>0.92</span></div>
<div class="a" style="left:558px;top:527px;width:83px;height:25px;display:flex;align-items:center;justify-content:center;padding-top:1px;color:#222;"><span>球半</span></div>
<div class="a" style="left:642px;top:527px;width:51px;height:25px;display:flex;align-items:center;justify-content:center;padding-top:1px;color:#222;"><span>0.97</span></div>
<div class="a" style="left:694px;top:527px;width:65px;height:25px;display:flex;align-items:center;justify-content:center;padding-top:1px;color:#222;"><span>1.37</span></div>
<div class="a" style="left:760px;top:527px;width:65px;height:25px;display:flex;align-items:center;justify-content:center;padding-top:1px;color:#222;"><span>4.94</span></div>
<div class="a" style="left:826px;top:527px;width:67px;height:25px;display:flex;align-items:center;justify-content:center;padding-top:1px;color:#222;"><span>7.23</span></div>
<div class="a" style="left:894px;top:527px;width:37px;height:25px;display:flex;align-items:center;justify-content:center;padding-top:1px;color:#d40000;"><span>胜</span></div>
<div class="a" style="left:932px;top:527px;width:37px;height:25px;display:flex;align-items:center;justify-content:center;padding-top:1px;color:#d40000;"><span>赢</span></div>
<div class="a" style="left:970px;top:527px;width:57px;height:25px;display:flex;align-items:center;justify-content:center;padding-top:1px;color:#127a12;"><span>走</span></div>
<div class="a" style="left:1px;top:553px;width:80px;height:25px;display:flex;align-items:center;justify-content:center;padding-top:1px;background:#990099;color:#fff;-webkit-text-stroke:0.3px #fff;"><span>德甲</span></div>
<div class="a" style="left:82px;top:553px;width:75px;height:25px;display:flex;align-items:center;justify-content:center;padding-top:1px;color:#222;"><span>24-10-26</span></div>
<div class="a" style="left:158px;top:553px;width:92px;height:25px;display:flex;align-items:center;justify-content:center;padding-top:1px;color:#222;"><span><span style="color:#127a12">奥格斯堡</span></span></div>
<div class="a" style="left:251px;top:553px;width:89px;height:25px;display:flex;align-items:center;justify-content:center;padding-top:1px;color:#222;"><span><span style="color:#d40000">2-1</span>(1-1)</span></div>
<div class="a" style="left:341px;top:553px;width:38px;height:25px;display:flex;align-items:center;justify-content:center;padding-top:1px;color:#222;"><span>3-5</span></div>
<div class="a" style="left:380px;top:553px;width:129px;height:25px;display:flex;align-items:center;justify-content:center;padding-top:1px;color:#222;"><span>多特蒙德<span class="r1">1</span></span></div>
<div class="a" style="left:510px;top:553px;width:47px;height:25px;display:flex;align-items:center;justify-content:center;padding-top:1px;color:#222;"><span>0.87</span></div>
<div class="a" style="left:558px;top:553px;width:83px;height:25px;display:flex;align-items:center;justify-content:center;padding-top:1px;color:#222;"><span>受半/一</span></div>
<div class="a" style="left:642px;top:553px;width:51px;height:25px;display:flex;align-items:center;justify-content:center;padding-top:1px;color:#222;"><span>1.02</span></div>
<div class="a" style="left:694px;top:553px;width:65px;height:25px;display:flex;align-items:center;justify-content:center;padding-top:1px;color:#222;"><span>3.92</span></div>
<div class="a" style="left:760px;top:553px;width:65px;height:25px;display:flex;align-items:center;justify-content:center;padding-top:1px;color:#222;"><span>4.04</span></div>
<div class="a" style="left:826px;top:553px;width:67px;height:25px;display:flex;align-items:center;justify-content:center;padding-top:1px;color:#222;"><span>1.81</span></div>
<div class="a" style="left:894px;top:553px;width:37px;height:25px;display:flex;align-items:center;justify-content:center;padding-top:1px;color:#d40000;"><span>胜</span></div>
<div class="a" style="left:932px;top:553px;width:37px;height:25px;display:flex;align-items:center;justify-content:center;padding-top:1px;color:#d40000;"><span>赢</span></div>
<div class="a" style="left:970px;top:553px;width:57px;height:25px;display:flex;align-items:center;justify-content:center;padding-top:1px;color:#1010a0;"><span>小</span></div>
<div class="a" style="left:1px;top:579px;width:80px;height:25px;display:flex;align-items:center;justify-content:center;padding-top:1px;background:#990099;color:#fff;-webkit-text-stroke:0.3px #fff;"><span>德甲</span></div>
<div class="a" style="left:82px;top:579px;width:75px;height:25px;display:flex;align-items:center;justify-content:center;padding-top:1px;color:#222;"><span>24-10-19</span></div>
<div class="a" style="left:158px;top:579px;width:92px;height:25px;display:flex;align-items:center;justify-content:center;padding-top:1px;color:#222;"><span>弗赖堡</span></div>
<div class="a" style="left:251px;top:579px;width:89px;height:25px;display:flex;align-items:center;justify-content:center;padding-top:1px;color:#222;"><span><span style="color:#d40000">3-1</span>(3-0)</span></div>
<div class="a" style="left:341px;top:579px;width:38px;height:25px;display:flex;align-items:center;justify-content:center;padding-top:1px;color:#222;"><span>5-4</span></div>
<div class="a" style="left:380px;top:579px;width:129px;height:25px;display:flex;align-items:center;justify-content:center;padding-top:1px;color:#222;"><span><span style="color:#127a12">奥格斯堡</span></span></div>
<div class="a" style="left:510px;top:579px;width:47px;height:25px;display:flex;align-items:center;justify-content:center;padding-top:1px;color:#222;"><span>1.08</span></div>
<div class="a" style="left:558px;top:579px;width:83px;height:25px;display:flex;align-items:center;justify-content:center;padding-top:1px;color:#222;"><span>一球</span></div>
<div class="a" style="left:642px;top:579px;width:51px;height:25px;display:flex;align-items:center;justify-content:center;padding-top:1px;color:#222;"><span>0.81</span></div>
<div class="a" style="left:694px;top:579px;width:65px;height:25px;display:flex;align-items:center;justify-content:center;padding-top:1px;color:#222;"><span>1.66</span></div>
<div class="a" style="left:760px;top:579px;width:65px;height:25px;display:flex;align-items:center;justify-content:center;padding-top:1px;color:#222;"><span>3.96</span></div>
<div class="a" style="left:826px;top:579px;width:67px;height:25px;display:flex;align-items:center;justify-content:center;padding-top:1px;color:#222;"><span>4.98</span></div>
<div class="a" style="left:894px;top:579px;width:37px;height:25px;display:flex;align-items:center;justify-content:center;padding-top:1px;color:#1010a0;"><span>负</span></div>
<div class="a" style="left:932px;top:579px;width:37px;height:25px;display:flex;align-items:center;justify-content:center;padding-top:1px;color:#1010a0;"><span>输</span></div>
<div class="a" style="left:970px;top:579px;width:57px;height:25px;display:flex;align-items:center;justify-content:center;padding-top:1px;color:#d40000;"><span>大</span></div>
<div class="a" style="left:1px;top:605px;width:80px;height:25px;display:flex;align-items:center;justify-content:center;padding-top:1px;background:#00a8a8;color:#fff;-webkit-text-stroke:0.3px #fff;"><span>球会友谊</span></div>
<div class="a" style="left:82px;top:605px;width:75px;height:25px;display:flex;align-items:center;justify-content:center;padding-top:1px;color:#222;"><span>24-10-10</span></div>
<div class="a" style="left:158px;top:605px;width:92px;height:25px;display:flex;align-items:center;justify-content:center;padding-top:1px;color:#222;"><span><span style="color:#127a12">奥格斯堡</span></span></div>
<div class="a" style="left:251px;top:605px;width:89px;height:25px;display:flex;align-items:center;justify-content:center;padding-top:1px;color:#222;"><span><span style="color:#d40000">1-0</span>(1-0)</span></div>
<div class="a" style="left:341px;top:605px;width:38px;height:25px;display:flex;align-items:center;justify-content:center;padding-top:1px;color:#222;"><span>7-10</span></div>
<div class="a" style="left:380px;top:605px;width:129px;height:25px;display:flex;align-items:center;justify-content:center;padding-top:1px;color:#222;"><span>雷根斯堡</span></div>
<div class="a" style="left:510px;top:605px;width:47px;height:25px;display:flex;align-items:center;justify-content:center;padding-top:1px;color:#222;"><span>0.97</span></div>
<div class="a" style="left:558px;top:605px;width:83px;height:25px;display:flex;align-items:center;justify-content:center;padding-top:1px;color:#222;"><span>一球</span></div>
<div class="a" style="left:642px;top:605px;width:51px;height:25px;display:flex;align-items:center;justify-content:center;padding-top:1px;color:#222;"><span>0.85</span></div>
<div class="a" style="left:694px;top:605px;width:65px;height:25px;display:flex;align-items:center;justify-content:center;padding-top:1px;color:#222;"><span>1.56</span></div>
<div class="a" style="left:760px;top:605px;width:65px;height:25px;display:flex;align-items:center;justify-content:center;padding-top:1px;color:#222;"><span>4.18</span></div>
<div class="a" style="left:826px;top:605px;width:67px;height:25px;display:flex;align-items:center;justify-content:center;padding-top:1px;color:#222;"><span>4.62</span></div>
<div class="a" style="left:894px;top:605px;width:37px;height:25px;display:flex;align-items:center;justify-content:center;padding-top:1px;color:#d40000;"><span>胜</span></div>
<div class="a" style="left:932px;top:605px;width:37px;height:25px;display:flex;align-items:center;justify-content:center;padding-top:1px;color:#127a12;"><span>走</span></div>
<div class="a" style="left:970px;top:605px;width:57px;height:25px;display:flex;align-items:center;justify-content:center;padding-top:1px;color:#1010a0;"><span>小</span></div>
<div class="a" style="left:1px;top:631px;width:80px;height:25px;display:flex;align-items:center;justify-content:center;padding-top:1px;background:#990099;color:#fff;-webkit-text-stroke:0.3px #fff;"><span>德甲</span></div>
<div class="a" style="left:82px;top:631px;width:75px;height:25px;display:flex;align-items:center;justify-content:center;padding-top:1px;color:#222;"><span>24-10-05</span></div>
<div class="a" style="left:158px;top:631px;width:92px;height:25px;display:flex;align-items:center;justify-content:center;padding-top:1px;color:#222;"><span><span style="color:#127a12">奥格斯堡</span></span></div>
<div class="a" style="left:251px;top:631px;width:89px;height:25px;display:flex;align-items:center;justify-content:center;padding-top:1px;color:#222;"><span><span style="color:#d40000">2-1</span>(1-0)</span></div>
<div class="a" style="left:341px;top:631px;width:38px;height:25px;display:flex;align-items:center;justify-content:center;padding-top:1px;color:#222;"><span>6-5</span></div>
<div class="a" style="left:380px;top:631px;width:129px;height:25px;display:flex;align-items:center;justify-content:center;padding-top:1px;color:#222;"><span>门兴格拉德巴赫</span></div>
<div class="a" style="left:510px;top:631px;width:47px;height:25px;display:flex;align-items:center;justify-content:center;padding-top:1px;color:#222;"><span>0.82</span></div>
<div class="a" style="left:558px;top:631px;width:83px;height:25px;display:flex;align-items:center;justify-content:center;padding-top:1px;color:#222;"><span>平手</span></div>
<div class="a" style="left:642px;top:631px;width:51px;height:25px;display:flex;align-items:center;justify-content:center;padding-top:1px;color:#222;"><span>1.07</span></div>
<div class="a" style="left:694px;top:631px;width:65px;height:25px;display:flex;align-items:center;justify-content:center;padding-top:1px;color:#222;"><span>2.39</span></div>
<div class="a" style="left:760px;top:631px;width:65px;height:25px;display:flex;align-items:center;justify-content:center;padding-top:1px;color:#222;"><span>3.72</span></div>
<div class="a" style="left:826px;top:631px;width:67px;height:25px;display:flex;align-items:center;justify-content:center;padding-top:1px;color:#222;"><span>2.73</span></div>
<div class="a" style="left:894px;top:631px;width:37px;height:25px;display:flex;align-items:center;justify-content:center;padding-top:1px;color:#d40000;"><span>胜</span></div>
<div class="a" style="left:932px;top:631px;width:37px;height:25px;display:flex;align-items:center;justify-content:center;padding-top:1px;color:#d40000;"><span>赢</span></div>
<div class="a" style="left:970px;top:631px;width:57px;height:25px;display:flex;align-items:center;justify-content:center;padding-top:1px;color:#127a12;"><span>走</span></div>
<div class="a" style="left:1px;top:657px;width:80px;height:25px;display:flex;align-items:center;justify-content:center;padding-top:1px;background:#990099;color:#fff;-webkit-text-stroke:0.3px #fff;"><span>德甲</span></div>
<div class="a" style="left:82px;top:657px;width:75px;height:25px;display:flex;align-items:center;justify-content:center;padding-top:1px;color:#222;"><span>24-09-28</span></div>
<div class="a" style="left:158px;top:657px;width:92px;height:25px;display:flex;align-items:center;justify-content:center;padding-top:1px;color:#222;"><span>RB莱比锡</span></div>
<div class="a" style="left:251px;top:657px;width:89px;height:25px;display:flex;align-items:center;justify-content:center;padding-top:1px;color:#222;"><span><span style="color:#d40000">4-0</span>(2-0)</span></div>
<div class="a" style="left:341px;top:657px;width:38px;height:25px;display:flex;align-items:center;justify-content:center;padding-top:1px;color:#222;"><span>8-5</span></div>
<div class="a" style="left:380px;top:657px;width:129px;height:25px;display:flex;align-items:center;justify-content:center;padding-top:1px;color:#222;"><span><span style="color:#127a12">奥格斯堡</span></span></div>
<div class="a" style="left:510px;top:657px;width:47px;height:25px;display:flex;align-items:center;justify-content:center;padding-top:1px;color:#222;"><span>0.82</span></div>
<div class="a" style="left:558px;top:657px;width:83px;height:25px;display:flex;align-items:center;justify-content:center;padding-top:1px;color:#222;"><span>一球</span></div>
<div class="a" style="left:642px;top:657px;width:51px;height:25px;display:flex;align-items:center;justify-content:center;padding-top:1px;color:#222;"><span>1.07</span></div>
<div class="a" style="left:694px;top:657px;width:65px;height:25px;display:flex;align-items:center;justify-content:center;padding-top:1px;color:#222;"><span>1.46</span></div>
<div class="a" style="left:760px;top:657px;width:65px;height:25px;display:flex;align-items:center;justify-content:center;padding-top:1px;color:#222;"><span>4.84</span></div>
<div class="a" style="left:826px;top:657px;width:67px;height:25px;display:flex;align-items:center;justify-content:center;padding-top:1px;color:#222;"><span>6.11</span></div>
<div class="a" style="left:894px;top:657px;width:37px;height:25px;display:flex;align-items:center;justify-content:center;padding-top:1px;color:#1010a0;"><span>负</span></div>
<div class="a" style="left:932px;top:657px;width:37px;height:25px;display:flex;align-items:center;justify-content:center;padding-top:1px;color:#1010a0;"><span>输</span></div>
<div class="a" style="left:970px;top:657px;width:57px;height:25px;display:flex;align-items:center;justify-content:center;padding-top:1px;color:#d40000;"><span>大</span></div>
<div class="a" style="left:1px;top:683px;width:80px;height:25px;display:flex;align-items:center;justify-content:center;padding-top:1px;background:#990099;color:#fff;-webkit-text-stroke:0.3px #fff;"><span>德甲</span></div>
<div class="a" style="left:82px;top:683px;width:75px;height:25px;display:flex;align-items:center;justify-content:center;padding-top:1px;color:#222;"><span>24-09-21</span></div>
<div class="a" style="left:158px;top:683px;width:92px;height:25px;display:flex;align-items:center;justify-content:center;padding-top:1px;color:#222;"><span><span class="r1">1</span><span style="color:#127a12">奥格斯堡</span></span></div>
<div class="a" style="left:251px;top:683px;width:89px;height:25px;display:flex;align-items:center;justify-content:center;padding-top:1px;color:#222;"><span><span style="color:#d40000">2-3</span>(1-2)</span></div>
<div class="a" style="left:341px;top:683px;width:38px;height:25px;display:flex;align-items:center;justify-content:center;padding-top:1px;color:#222;"><span>14-1</span></div>
<div class="a" style="left:380px;top:683px;width:129px;height:25px;display:flex;align-items:center;justify-content:center;padding-top:1px;color:#222;"><span>美因茨<span class="r1">1</span></span></div>
<div class="a" style="left:510px;top:683px;width:47px;height:25px;display:flex;align-items:center;justify-content:center;padding-top:1px;color:#222;"><span>1.06</span></div>
<div class="a" style="left:558px;top:683px;width:83px;height:25px;display:flex;align-items:center;justify-content:center;padding-top:1px;color:#222;"><span>平/半</span></div>
<div class="a" style="left:642px;top:683px;width:51px;height:25px;display:flex;align-items:center;justify-content:center;padding-top:1px;color:#222;"><span>0.83</span></div>
<div class="a" style="left:694px;top:683px;width:65px;height:25px;display:flex;align-items:center;justify-content:center;padding-top:1px;color:#222;"><span>2.38</span></div>
<div class="a" style="left:760px;top:683px;width:65px;height:25px;display:flex;align-items:center;justify-content:center;padding-top:1px;color:#222;"><span>3.49</span></div>
<div class="a" style="left:826px;top:683px;width:67px;height:25px;display:flex;align-items:center;justify-content:center;padding-top:1px;color:#222;"><span>2.88</span></div>
<div class="a" style="left:894px;top:683px;width:37px;height:25px;display:flex;align-items:center;justify-content:center;padding-top:1px;color:#1010a0;"><span>负</span></div>
<div class="a" style="left:932px;top:683px;width:37px;height:25px;display:flex;align-items:center;justify-content:center;padding-top:1px;color:#1010a0;"><span>输</span></div>
<div class="a" style="left:970px;top:683px;width:57px;height:25px;display:flex;align-items:center;justify-content:center;padding-top:1px;color:#d40000;"><span>大</span></div>
<div class="a" style="left:1px;top:709px;width:1026px;height:25px;display:flex;align-items:center;justify-content:center;padding-top:1px;color:#222;letter-spacing:0.25px;"><span>近<span style="color:#d40000">10</span>场,胜5平2负3, 胜率:<span style="color:#d40000">50%</span> 让胜率:<span style="color:#d40000">50%</span> 大率:<span style="color:#d40000">40%</span> 单率:<span style="color:#d40000">60%</span></span></div>
<div class="a" style="left:0px;top:409px;width:1028px;height:1px;background:#c0c0c0"></div>
<div class="a" style="left:509px;top:429px;width:519px;height:1px;background:#c0c0c0"></div>
<div class="a" style="left:0px;top:448px;width:1028px;height:1px;background:#c0c0c0"></div>
<div class="a" style="left:0px;top:474px;width:1028px;height:1px;background:#c0c0c0"></div>
<div class="a" style="left:0px;top:500px;width:1028px;height:1px;background:#c0c0c0"></div>
<div class="a" style="left:0px;top:526px;width:1028px;height:1px;background:#c0c0c0"></div>
<div class="a" style="left:0px;top:552px;width:1028px;height:1px;background:#c0c0c0"></div>
<div class="a" style="left:0px;top:578px;width:1028px;height:1px;background:#c0c0c0"></div>
<div class="a" style="left:0px;top:604px;width:1028px;height:1px;background:#c0c0c0"></div>
<div class="a" style="left:0px;top:630px;width:1028px;height:1px;background:#c0c0c0"></div>
<div class="a" style="left:0px;top:656px;width:1028px;height:1px;background:#c0c0c0"></div>
<div class="a" style="left:0px;top:682px;width:1028px;height:1px;background:#c0c0c0"></div>
<div class="a" style="left:0px;top:708px;width:1028px;height:1px;background:#c0c0c0"></div>
<div class="a" style="left:0px;top:734px;width:1028px;height:1px;background:#c0c0c0"></div>
<div class="a" style="left:0px;top:409px;width:1px;height:326px;background:#c0c0c0"></div>
<div class="a" style="left:1027px;top:409px;width:1px;height:326px;background:#c0c0c0"></div>
<div class="a" style="left:81px;top:409px;width:1px;height:300px;background:#c0c0c0"></div>
<div class="a" style="left:157px;top:409px;width:1px;height:300px;background:#c0c0c0"></div>
<div class="a" style="left:250px;top:409px;width:1px;height:300px;background:#c0c0c0"></div>
<div class="a" style="left:340px;top:409px;width:1px;height:300px;background:#c0c0c0"></div>
<div class="a" style="left:379px;top:409px;width:1px;height:300px;background:#c0c0c0"></div>
<div class="a" style="left:509px;top:409px;width:1px;height:300px;background:#c0c0c0"></div>
<div class="a" style="left:557px;top:429px;width:1px;height:280px;background:#c0c0c0"></div>
<div class="a" style="left:641px;top:429px;width:1px;height:280px;background:#c0c0c0"></div>
<div class="a" style="left:693px;top:409px;width:1px;height:300px;background:#c0c0c0"></div>
<div class="a" style="left:759px;top:429px;width:1px;height:280px;background:#c0c0c0"></div>
<div class="a" style="left:825px;top:429px;width:1px;height:280px;background:#c0c0c0"></div>
<div class="a" style="left:893px;top:409px;width:1px;height:300px;background:#c0c0c0"></div>
<div class="a" style="left:931px;top:429px;width:1px;height:280px;background:#c0c0c0"></div>
<div class="a" style="left:969px;top:429px;width:1px;height:280px;background:#c0c0c0"></div></body></html>
